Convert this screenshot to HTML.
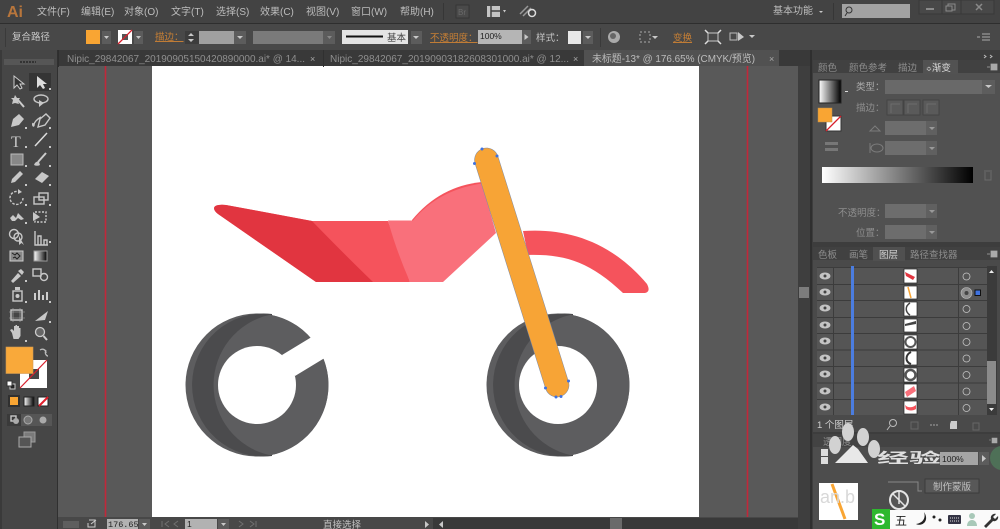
<!DOCTYPE html>
<html><head><meta charset="utf-8">
<style>
html,body{margin:0;padding:0;background:#484848;width:1000px;height:529px;overflow:hidden}
svg{display:block;filter:blur(.35px)}
text{font-family:"Liberation Sans","Noto Sans CJK SC",sans-serif;font-size:9.5px;fill:#c4c4c4}
.m{font-size:10px;fill:#bdbdbd}
.o{fill:#c67f35;text-decoration:underline}
.d{fill:#8e8e8e}
.i{fill:none;stroke:#c8c8c8;stroke-width:1.4}
.f{fill:#c8c8c8}
</style></head><body>
<svg width="1000" height="529" viewBox="0 0 1000 529" xmlns="http://www.w3.org/2000/svg">
<defs>
<linearGradient id="g" x1="0" x2="1" y1="0" y2="0"><stop offset="0" stop-color="#fff"/><stop offset="1" stop-color="#000"/></linearGradient>
</defs>
<!-- base bars -->
<rect width="1000" height="24" fill="#434343"/>
<rect y="23" width="1000" height="1" fill="#2e2e2e"/>
<rect y="24" width="1000" height="26" fill="#484848"/>
<rect y="50" width="1000" height="17" fill="#393939"/>
<!-- canvas -->
<rect x="58" y="66" width="752" height="463" fill="#595959"/>
<rect x="152" y="66" width="547" height="451" fill="#fff"/>
<line x1="105.500" y1="66" x2="105.500" y2="517" stroke="#c0283a" stroke-width="1.600"/>
<line x1="747.500" y1="66" x2="747.500" y2="517" stroke="#c0283a" stroke-width="1.600"/>
<!-- top menu -->
<text x="7" y="17" style="font-size:16px;font-weight:bold;fill:#b8763c">Ai</text>
<text class="m" x="37" y="15">文件(F)</text>
<text class="m" x="81" y="15">编辑(E)</text>
<text class="m" x="124" y="15">对象(O)</text>
<text class="m" x="171" y="15">文字(T)</text>
<text class="m" x="216" y="15">选择(S)</text>
<text class="m" x="260" y="15">效果(C)</text>
<text class="m" x="306" y="15">视图(V)</text>
<text class="m" x="351" y="15">窗口(W)</text>
<text class="m" x="400" y="15">帮助(H)</text>
<rect x="443" y="3" width="1" height="17" fill="#363636"/>
<rect x="456" y="5" width="13" height="13" fill="#4a4a4a" stroke="#363636"/>
<text x="458" y="15" style="font-size:8px;fill:#6a6a6a">Br</text>
<rect x="487" y="6" width="13" height="11" fill="#c4c4c4"/>
<path d="M491 6v11M491 11h9" stroke="#434343" stroke-width="1.500"/>
<path d="M503 10l3 0-1.500 2.500z" class="f"/>
<path d="M520 14l8-8M523 16l8-8" stroke="#999" stroke-width="1.500"/>
<circle cx="532" cy="13" r="3.500" fill="none" stroke="#ddd" stroke-width="1.500"/>
<text class="m" x="773" y="14">基本功能</text>
<path d="M819 11h4l-2 2z" class="f"/>
<rect x="833" y="3" width="1" height="17" fill="#363636"/>
<rect x="842" y="4" width="68" height="14" fill="#a2a2a2"/>
<circle cx="849" cy="10" r="3" fill="none" stroke="#333" stroke-width="1"/><path d="M847 13l-2 3" stroke="#333"/>
<rect x="919" y="0" width="75" height="14" fill="#484848" stroke="#383838"/>
<path d="M942 0v14M961 0v14" stroke="#383838"/>
<rect x="926" y="8" width="8" height="2" fill="#8a8a8a"/>
<rect x="948" y="4" width="7" height="6" fill="none" stroke="#8a8a8a"/><rect x="946" y="6" width="6" height="5" fill="#484848" stroke="#8a8a8a"/>
<path d="M976 4l6 6M982 4l-6 6" stroke="#8a8a8a" stroke-width="1.500"/>
<!-- control bar -->
<rect x="5" y="28" width="1" height="19" fill="#3a3a3a"/>
<text x="12" y="40" style="fill:#c8c8c8">复合路径</text>
<rect x="86" y="30" width="14" height="14" fill="#f9a533"/>
<rect x="102" y="31" width="9" height="13" fill="#5c5c5c"/><path d="M104 36h5l-2.500 3z" class="f"/>
<rect x="118" y="30" width="14" height="14" fill="#fff"/><rect x="122" y="34" width="6" height="6" fill="#555"/><path d="M118 44l14-14" stroke="#d8202c" stroke-width="1.300"/>
<rect x="134" y="31" width="9" height="13" fill="#5c5c5c"/><path d="M136 36h5l-2.500 3z" class="f"/>
<text class="o" x="155" y="40">描边：</text>
<rect x="185" y="31" width="14" height="13" fill="#3c3c3c"/><path d="M188 36h6l-3-3zM188 39h6l-3 3z" class="f"/>
<rect x="199" y="31" width="35" height="13" fill="#a0a0a0"/>
<rect x="234" y="31" width="12" height="13" fill="#5c5c5c"/><path d="M237 36h6l-3 3z" class="f"/>
<rect x="253" y="31" width="70" height="13" fill="#7a7a7a"/>
<rect x="323" y="31" width="12" height="13" fill="#5c5c5c"/><path d="M327 36h5l-2.500 3z" fill="#888"/>
<rect x="342" y="30" width="66" height="14" fill="#e4e4e4"/>
<rect x="346" y="35.500" width="37" height="2" fill="#111"/>
<text x="387" y="41" style="fill:#444">基本</text>
<rect x="411" y="31" width="11" height="13" fill="#5c5c5c"/><path d="M413 36h6l-3 3z" class="f"/>
<text class="o" x="430" y="41">不透明度：</text>
<rect x="478" y="30" width="48" height="14" fill="#b5b5b5"/>
<text x="480" y="39" style="font-size:8.500px;fill:#222">100%</text>
<rect x="522" y="30" width="9" height="14" fill="#5c5c5c"/><path d="M524.500 34v6l4-3z" class="f"/>
<text x="536" y="41">样式：</text>
<rect x="568" y="31" width="13" height="13" fill="#e8e8e8"/>
<rect x="583" y="31" width="10" height="13" fill="#5c5c5c"/><path d="M585 36h6l-3 3z" class="f"/>
<rect x="600" y="28" width="1" height="19" fill="#3a3a3a"/>
<circle cx="614" cy="37" r="6" fill="#aaa"/><circle cx="613" cy="36" r="3" fill="#666"/>
<rect x="640" y="32" width="10" height="10" fill="none" stroke="#aaa" stroke-dasharray="2 2"/>
<path d="M652 36h6l-3 3z" class="f"/>
<text class="o" x="673" y="41">变换</text>
<rect x="708" y="33" width="10" height="8" fill="none" stroke="#c8c8c8"/><path d="M705 30l3 3M721 30l-3 3M705 44l3-3M721 44l-3-3" stroke="#ddd" stroke-width="1.500"/>
<rect x="730" y="33" width="7" height="7" fill="none" stroke="#bbb"/><path d="M738 32l6 5-6 4z" class="f"/>
<path d="M749 35h6l-3 3z" class="f"/>
<path d="M977 37h3M982 34h8M982 37h8M982 40h8" stroke="#aaa"/>
<!-- tabs -->
<rect x="58" y="50" width="1" height="17" fill="#2e2e2e"/>
<text x="67" y="62" textLength="238" lengthAdjust="spacingAndGlyphs" style="font-size:10.400px;fill:#8f8f8f">Nipic_29842067_20190905150420890000.ai* @ 14...</text>
<text x="310" y="62" style="font-size:9px;fill:#aaa">×</text>
<rect x="323" y="50" width="1" height="17" fill="#303030"/>
<text x="330" y="62" textLength="239" lengthAdjust="spacingAndGlyphs" style="font-size:10.400px;fill:#8f8f8f">Nipic_29842067_20190903182608301000.ai* @ 12...</text>
<text x="573" y="62" style="font-size:9px;fill:#aaa">×</text>
<rect x="584" y="50" width="195" height="16" fill="#515151"/>
<text x="592" y="62" textLength="163" lengthAdjust="spacingAndGlyphs" style="font-size:10.400px;fill:#bcbcbc">未标题-13* @ 176.65% (CMYK/预览)</text>
<text x="769" y="62" style="font-size:9px;fill:#aaa">×</text>
<!-- artwork -->
<path d="M214 208Q215 204 226 205L312 221 388 221 410 282 316 282 218 214Q214 211 214 208Z" fill="#f5535c"/>
<path d="M214 208Q215 204 226 205L312 221Q345 255 373 282L316 282 218 214Q214 211 214 208Z" fill="#e13540"/>
<path d="M412 220Q440 186 482 182L490 200 412 221Z" fill="#f5535c"/>
<path d="M388 220.500L413 220.500Q438 190 482 183.500L496 233 443 282 410 282Q396 250 388 220.500Z" fill="#f9707b"/>
<path d="M523 231C565 228 610 240 647 284Q651 292 645 293L623 293C590 262 565 254 528 255Z" fill="#f5535c"/>
<!-- left wheel -->
<circle cx="257" cy="385" r="71.500" fill="#5d5d5f"/>
<path d="M272 314A71.500 71.500 0 1 0 272 456Z" fill="#4b4b4d"/>
<path d="M270 314.700A72 72 0 0 0 270 455.300A71.500 71.500 0 0 0 270 314.700Z" fill="#5d5d5f"/>
<circle cx="257" cy="385" r="39" fill="#fff"/>
<path d="M282 355L310 338 345 318 355 340 323 359 295 376Z" fill="#fff"/>
<!-- right wheel -->
<circle cx="558" cy="385" r="71.500" fill="#5d5d5f"/>
<path d="M573 314A71.500 71.500 0 1 0 573 456Z" fill="#4b4b4d"/>
<path d="M571 314.700A72 72 0 0 0 571 455.300A71.500 71.500 0 0 0 571 314.700Z" fill="#5d5d5f"/>
<circle cx="558" cy="385" r="39" fill="#fff"/>
<!-- fork -->
<line x1="486.500" y1="160" x2="557" y2="385" stroke="#7d8aa6" stroke-width="24.500" stroke-linecap="round"/>
<line x1="486.500" y1="160" x2="557" y2="385" stroke="#f7a436" stroke-width="23.500" stroke-linecap="round"/>
<g fill="#3f72e0"><circle cx="474.500" cy="163.500" r="1.500"/><circle cx="482" cy="149" r="1.500"/><circle cx="497" cy="156" r="1.500"/><circle cx="568.500" cy="381" r="1.500"/><circle cx="545.500" cy="388" r="1.500"/><circle cx="556" cy="397" r="1.500"/><circle cx="561" cy="396.500" r="1.500"/></g>
<!-- status bar -->
<rect x="58" y="517" width="752" height="12" fill="#484848"/>
<rect x="63" y="521" width="16" height="7" fill="#5e5e5e"/>
<path d="M89 520h6v7h-7v-4M91 524l5-4" stroke="#ccc" fill="none"/>
<rect x="107" y="519" width="31" height="10" fill="#b2b2b2"/>
<text x="108" y="527" style="font-size:8.500px;fill:#222;font-family:'Liberation Mono',monospace">176.65</text>
<rect x="139" y="519" width="11" height="10" fill="#5c5c5c"/><path d="M142 523h5l-2.500 3z" class="f"/>
<path d="M162 521v6M169 521l-4 3 4 3M178 521l-4 3 4 3" stroke="#707070" fill="none"/>
<rect x="185" y="519" width="32" height="10" fill="#b2b2b2"/>
<text x="187" y="527" style="font-size:8.500px;fill:#222">1</text>
<rect x="218" y="519" width="11" height="10" fill="#5c5c5c"/><path d="M221 523h5l-2.500 3z" class="f"/>
<path d="M239 521l4 3-4 3M250 521l4 3-4 3M256 521v6" stroke="#707070" fill="none"/>
<text x="323" y="528">直接选择</text>
<path d="M425 521v7l4-3.500z" class="f"/>
<rect x="433" y="518" width="377" height="11" fill="#393939"/>
<path d="M443 521v7l-4-3.500z" class="f"/>
<rect x="610" y="518" width="12" height="11" fill="#6a6a6a"/>
<!-- v scrollbar -->
<rect x="798" y="66" width="12" height="463" fill="#3e3e3e"/>
<rect x="799" y="287" width="10" height="11" fill="#7c7c7c"/>
<!-- left toolbar -->
<rect x="0" y="50" width="58" height="479" fill="#464646"/>
<rect x="57" y="50" width="1" height="479" fill="#303030"/>
<rect x="0" y="50" width="2" height="479" fill="#3a3a3a"/>
<rect x="4" y="59" width="50" height="6" fill="#565656"/>
<path d="M20 62h16" stroke="#333" stroke-dasharray="2 1" stroke-width="2"/>
<rect x="29" y="73" width="22" height="18" fill="#353535"/>
<path d="M14 76v12l3-3 3 4 2-1-2-4h4Z" fill="#333" stroke="#ccc"/>
<path d="M37 76v12l3-3 3 4 2-1-2-4h4Z" fill="#ddd"/>
<!-- wand, lasso -->
<path d="M18 100l6 7" stroke="#ccc" stroke-width="2"/><path d="M15 95l2 3 3 0-2 3 1 3-4-1-3 1 1-4-2-2h3z" class="f"/>
<ellipse cx="41" cy="99" rx="7" ry="4" class="i"/><path d="M39 100l0 7 5-4z" class="f"/>
<!-- pen -->
<path d="M11 127l2-8 6-5 5 5-5 6z" class="f"/><path d="M41 117c-5 3-7 6-7 8s-2 1-1-2M38 127l2-8 6-5 4 4-5 7z" class="i"/>
<!-- T, line -->
<text x="11" y="147" style="font-size:16px;font-family:'Liberation Serif',serif;fill:#c8c8c8">T</text>
<path d="M35 146l12-13" stroke="#ddd" stroke-width="1.500"/>
<!-- rect, brush -->
<rect x="11" y="154" width="12" height="11" fill="#888" stroke="#bbb"/>
<path d="M46 153l-8 9" stroke="#ccc" stroke-width="2"/><path d="M34 165c1-3 3-4 5-3l1 3c-2 1-4 1-6 0z" class="f"/>
<!-- pencil, eraser -->
<path d="M11 183l1-4 8-8 3 3-8 8z" class="f"/>
<path d="M35 179l7-7 7 4-7 7z" class="f"/>
<!-- rotate, scale -->
<path d="M23 198a6.500 6.500 0 1 1-3-5.500" class="i" stroke-dasharray="2.500 1.500"/><path d="M18 189l4 3-4 2z" class="f"/>
<rect x="34" y="197" width="10" height="7" class="i"/><rect x="39" y="193" width="9" height="7" class="i"/>
<!-- warp, free transform -->
<path d="M10 218l3-3 3 3 2-5 3 3 3 3-3 1-3-2-3 3-3 0z" class="f"/>
<rect x="35" y="212" width="11" height="10" class="i" stroke-dasharray="2 1.500"/><path d="M33 212l7 5-7 4z" class="f"/>
<!-- shape builder, mesh -->
<circle cx="14" cy="234" r="4.500" class="i"/><circle cx="18" cy="237" r="4" class="i"/><path d="M19 236v9l2.500-2 2.500 2z" class="f"/>
<path d="M35 231v14h13M38 245v-9h3v9h3v-5h3v5" class="i"/>
<!-- mesh pattern, gradient -->
<rect x="10" y="251" width="13" height="10" fill="#888" stroke="#ccc"/><path d="M12 253l3 2 2-2 3 3-3 3-2-2-2 1" stroke="#222" fill="none"/>
<rect x="34" y="251" width="13" height="10" fill="url(#g)" stroke="#999"/>
<!-- eyedropper, blend -->
<path d="M11 281l7-8 3 3-8 7zM18 271l3-2 3 3-2 3z" class="f"/>
<rect x="33" y="269" width="8" height="7" class="i"/><circle cx="44" cy="277" r="3.500" class="i"/>
<!-- symbol, graph -->
<rect x="13" y="291" width="9" height="10" class="i"/><circle cx="17.500" cy="296" r="2" class="f"/><rect x="15" y="287" width="5" height="3" class="f"/>
<path d="M35 300v-7M39 300v-10M43 300v-5M47 300v-8" stroke="#ccc" stroke-width="2"/>
<!-- artboard, slice -->
<rect x="11" y="310" width="11" height="10" class="i"/><path d="M9 312h16M9 318h16M13 308v14M20 308v14" stroke="#aaa" stroke-width=".6"/>
<path d="M35 321l13-10-3 9z" class="f"/>
<!-- hand, zoom -->
<path d="M12 333l-2-3 2-1 2 2v-5h1.500v4-5h1.500v5-4h2v5-3h1.500v8l-2 3h-5z" class="f"/>
<circle cx="40" cy="332" r="4.500" fill="#666" stroke="#ccc" stroke-width="1.300"/><path d="M43.500 336l3.500 4" stroke="#ccc" stroke-width="2"/>
<!-- corner tick marks -->
<g class="f">
<rect x="49" y="88" width="2" height="2"/><rect x="25" y="127" width="2" height="2"/><rect x="49" y="127" width="2" height="2"/><rect x="25" y="146" width="2" height="2"/><rect x="49" y="146" width="2" height="2"/><rect x="25" y="165" width="2" height="2"/><rect x="49" y="165" width="2" height="2"/><rect x="25" y="184" width="2" height="2"/><rect x="49" y="184" width="2" height="2"/><rect x="25" y="204" width="2" height="2"/><rect x="49" y="204" width="2" height="2"/><rect x="25" y="222" width="2" height="2"/><rect x="49" y="241" width="2" height="2"/><rect x="25" y="280" width="2" height="2"/><rect x="25" y="301" width="2" height="2"/><rect x="49" y="301" width="2" height="2"/><rect x="49" y="321" width="2" height="2"/><rect x="25" y="340" width="2" height="2"/>
</g>
<!-- fill/stroke -->
<rect x="20" y="360" width="27" height="28" fill="#fff"/>
<rect x="29" y="369" width="10" height="10" fill="#464646"/>
<path d="M20 388L47 360" stroke="#d8202c" stroke-width="1.200"/>
<rect x="6" y="347" width="27" height="26.500" fill="#f9a93a" stroke="#d09a52" stroke-width=".6"/>
<path d="M40 350c3-2 6 0 6 3M46 350c-2 4 1 6 2 6" stroke="#bbb" fill="none" stroke-width="1.300"/>
<rect x="10" y="384" width="5" height="5" fill="#222" stroke="#ccc"/><rect x="7" y="381" width="5" height="5" fill="#fff" stroke="#333"/>
<rect x="8" y="395" width="12" height="12" fill="#303030"/><rect x="10" y="397" width="8" height="8" fill="#f9a533"/>
<rect x="24" y="397" width="10" height="9" fill="url(#g)" stroke="#222"/>
<rect x="38" y="397" width="10" height="9" fill="#fff" stroke="#222"/><path d="M39 406l9-9" stroke="#e0202c" stroke-width="2"/>
<rect x="7" y="414" width="45" height="12" fill="#565656"/><rect x="7" y="414" width="14" height="12" fill="#3a3a3a"/>
<rect x="11" y="416" width="5" height="5" class="i" stroke-width="1"/><circle cx="16" cy="421" r="3" fill="#aaa"/>
<circle cx="28" cy="420" r="4" fill="#777" stroke="#aaa"/><circle cx="43" cy="420" r="3.500" fill="#aaa"/>
<rect x="24" y="432" width="11" height="10" fill="#7a7a7a" stroke="#9a9a9a"/><rect x="19" y="437" width="12" height="10" fill="#555" stroke="#aaa"/>
<!-- right column -->
<rect x="810" y="50" width="190" height="479" fill="#3d3d3d"/>
<rect x="810" y="50" width="2" height="479" fill="#2f2f2f"/>
<path d="M984 55l2 1.500-2 1.500M990 55l2 1.500-2 1.500" stroke="#bbb" fill="none"/>
<!-- gradient panel -->
<rect x="813" y="60" width="187" height="182" fill="#515151"/>
<rect x="813" y="60" width="187" height="13" fill="#414141"/>
<rect x="923" y="60" width="35" height="14" fill="#525252"/>
<text class="d" x="818" y="71">颜色</text>
<text class="d" x="849" y="71">颜色参考</text>
<text class="d" x="898" y="71">描边</text>
<text x="926" y="71" style="fill:#dcdcdc"><tspan style="font-size:7px">≎</tspan>渐变</text>
<path d="M987 67h3M991 64h6v6h-6z" fill="#aaa" stroke="#aaa" stroke-width=".8"/>
<rect x="819" y="80" width="22" height="23" fill="url(#g)" stroke="#222"/>
<rect x="845" y="91" width="3" height="1" fill="#ddd"/>
<rect x="826" y="116" width="15" height="15" fill="#fff" stroke="#333"/>
<path d="M826 131l15-15" stroke="#d8202c" stroke-width="1.300"/>
<rect x="818" y="108" width="14" height="14" fill="#f9a533" stroke="#bd914f" stroke-width=".5"/>
<rect x="825" y="142" width="13" height="3" fill="#777"/><rect x="825" y="148" width="13" height="3" fill="#777"/>
<text x="856" y="90" style="fill:#aaa">类型：</text>
<rect x="885" y="80" width="97" height="14" fill="#696969"/>
<rect x="982" y="80" width="13" height="14" fill="#5d5d5d"/>
<path d="M985 85h7l-3.500 3z" class="f"/>
<text x="856" y="111" class="d">描边：</text>
<g fill="#5a5a5a" stroke="#444"><rect x="887" y="100" width="16" height="15"/><rect x="904" y="100" width="16" height="15"/><rect x="923" y="100" width="16" height="15"/></g>
<path d="M891 113v-9h9M908 113v-9h9M927 113v-9h9" stroke="#6c6c6c" fill="none"/>
<path d="M870 131l5-5 5 5z" fill="none" stroke="#7c7c7c"/>
<rect x="885" y="121" width="41" height="14" fill="#6d6d6d"/><rect x="926" y="121" width="11" height="14" fill="#606060"/><path d="M929 127h6l-3 3z" fill="#999"/>
<rect x="885" y="141" width="41" height="14" fill="#6d6d6d"/><rect x="926" y="141" width="11" height="14" fill="#606060"/><path d="M929 147h6l-3 3z" fill="#999"/>
<ellipse cx="877" cy="148" rx="6" ry="4" fill="none" stroke="#7c7c7c"/><path d="M870 143v10" stroke="#7c7c7c"/>
<rect x="822" y="167" width="151" height="16" fill="url(#g)"/>
<path d="M984 171h8M985 172v8h6v-8" stroke="#6c6c6c" fill="none"/>
<text x="838" y="216" class="d">不透明度：</text>
<rect x="885" y="204" width="41" height="14" fill="#6d6d6d"/><rect x="926" y="204" width="11" height="14" fill="#606060"/><path d="M929 210h6l-3 3z" fill="#999"/>
<text x="856" y="236" class="d">位置：</text>
<rect x="885" y="225" width="41" height="14" fill="#6d6d6d"/><rect x="926" y="225" width="11" height="14" fill="#606060"/><path d="M929 231h6l-3 3z" fill="#999"/>
<!-- layers panel -->
<rect x="813" y="247" width="187" height="185" fill="#4a4a4a"/>
<rect x="813" y="247" width="187" height="13" fill="#414141"/>
<rect x="873" y="247" width="32" height="14" fill="#505050"/>
<text class="d" x="818" y="258">色板</text>
<text class="d" x="849" y="258">画笔</text>
<text x="879" y="258" style="fill:#d4d4d4">图层</text>
<text class="d" x="910" y="258">路径查找器</text>
<path d="M987 254h3M991 251h6v6h-6z" fill="#aaa" stroke="#aaa" stroke-width=".8"/>
<rect x="817" y="267" width="170" height="148" fill="#555"/>
<g stroke="#3c3c3c"><path d="M817 267.500h170M817 284.500h170M817 300.500h170M817 317.500h170M817 333.500h170M817 350h170M817 366.500h170M817 383h170M817 399.500h170M833.500 267v148M958.500 267v148"/></g>
<rect x="851" y="266" width="3" height="149" fill="#4b7de0"/>
<g fill="#c4c4c4"><ellipse cx="825" cy="276" rx="5.500" ry="3.500"/><ellipse cx="825" cy="292" rx="5.500" ry="3.500"/><ellipse cx="825" cy="308" rx="5.500" ry="3.500"/><ellipse cx="825" cy="325" rx="5.500" ry="3.500"/><ellipse cx="825" cy="341" rx="5.500" ry="3.500"/><ellipse cx="825" cy="358" rx="5.500" ry="3.500"/><ellipse cx="825" cy="374" rx="5.500" ry="3.500"/><ellipse cx="825" cy="391" rx="5.500" ry="3.500"/><ellipse cx="825" cy="407" rx="5.500" ry="3.500"/></g>
<g fill="#444"><circle cx="825" cy="276" r="1.500"/><circle cx="825" cy="292" r="1.500"/><circle cx="825" cy="308" r="1.500"/><circle cx="825" cy="325" r="1.500"/><circle cx="825" cy="341" r="1.500"/><circle cx="825" cy="358" r="1.500"/><circle cx="825" cy="374" r="1.500"/><circle cx="825" cy="391" r="1.500"/><circle cx="825" cy="407" r="1.500"/></g>
<!-- thumbs -->
<g fill="#fff" stroke="#222" stroke-width=".7"><rect x="904" y="269" width="13" height="14"/><rect x="904" y="286" width="13" height="13"/><rect x="904" y="302" width="13" height="14"/><rect x="904" y="319" width="13" height="13"/><rect x="904" y="335" width="13" height="14"/><rect x="904" y="351" width="13" height="14"/><rect x="904" y="368" width="13" height="14"/><rect x="904" y="384" width="13" height="14"/><rect x="904" y="401" width="13" height="13"/></g>
<path d="M905 272l10 5-2 3-7-4z" fill="#e13540"/>
<path d="M908 287l3 11" stroke="#f9a533" stroke-width="1.500"/>
<path d="M910 303c-5 3-5 9 0 12" stroke="#444" stroke-width="1.500" fill="none"/>
<path d="M905 324l11-3v3l-11 2z" fill="#444"/>
<circle cx="910.500" cy="342" r="5" fill="none" stroke="#555" stroke-width="2"/>
<path d="M911 352c-6 3-6 10 0 12" stroke="#333" stroke-width="2" fill="none"/>
<circle cx="910.500" cy="375" r="5" fill="none" stroke="#555" stroke-width="2.500"/>
<path d="M905 392l9-6 2 5-9 6z" fill="#f9707b"/>
<path d="M905 405c3 3 7 3 11 0v4c-3 2-7 2-10 0z" fill="#f5535c"/>
<g fill="none" stroke="#c4c4c4" stroke-width=".8"><circle cx="966.500" cy="276.500" r="3.500"/><circle cx="966.500" cy="309" r="3.500"/><circle cx="966.500" cy="326" r="3.500"/><circle cx="966.500" cy="342" r="3.500"/><circle cx="966.500" cy="358.500" r="3.500"/><circle cx="966.500" cy="375" r="3.500"/><circle cx="966.500" cy="391.500" r="3.500"/><circle cx="966.500" cy="408" r="3.500"/></g>
<circle cx="966.500" cy="293" r="5.500" fill="#8e8e8e" stroke="#bbb" stroke-width=".6"/><circle cx="966.500" cy="293" r="2" fill="#444"/>
<rect x="975" y="290" width="5.500" height="5.500" fill="#3f72e0" stroke="#111"/>
<rect x="987" y="266" width="10" height="149" fill="#3b3b3b"/>
<rect x="987" y="361" width="9" height="43" fill="#8b8b8b"/>
<path d="M989 273h5l-2.500-3zM989 408h5l-2.500 3z" fill="#eee"/>
<text x="817" y="428" style="fill:#cfcfcf">1 个图层</text>
<circle cx="893" cy="423" r="3.500" fill="none" stroke="#bbb"/><path d="M890 426l-3 4" stroke="#bbb"/>
<rect x="911" y="422" width="7" height="7" fill="none" stroke="#666"/><path d="M930 425h8" stroke="#777" stroke-dasharray="2 1" stroke-width="2"/>
<path d="M951 421h6v8h-7v-5z" fill="#ccc"/><rect x="973" y="423" width="6" height="7" fill="none" stroke="#666"/>
<!-- transparency panel -->
<rect x="813" y="434" width="187" height="95" fill="#4d4d4d"/>
<rect x="813" y="434" width="187" height="13" fill="#434343"/>
<text x="823" y="445" class="d">透明度</text>
<path d="M989 440h2M992 438h5v5h-5z" fill="#aaa" stroke="#aaa" stroke-width=".6"/>
<rect x="940" y="452" width="38" height="13" fill="#a5a5a5"/>
<text x="942" y="462" style="font-size:8.500px;fill:#222">100%</text>
<rect x="979" y="452" width="10" height="13" fill="#5c5c5c"/><path d="M982 455v7l4-3.500z" class="f"/>
<rect x="819" y="483" width="39" height="37" fill="#fff"/>
<path d="M832 484l13 35" stroke="#f9a533" stroke-width="3"/>
<rect x="925" y="479" width="54" height="14" fill="#585858" stroke="#3c3c3c"/>
<text x="933" y="490" style="fill:#c0c0c0">制作蒙版</text>
<path d="M888 482h30v9h4" stroke="#888" fill="none"/>
<!-- watermark paw -->
<g fill="#d2d2d2"><ellipse cx="848" cy="432" rx="6" ry="9"/><ellipse cx="863" cy="437" rx="6" ry="9"/><ellipse cx="874" cy="449" rx="6" ry="9"/><ellipse cx="835" cy="445" rx="6" ry="9"/></g>
<path d="M835 463l18-18 5 4 10 14z" fill="#e8e8e8"/>
<rect x="821" y="449" width="7" height="7" fill="#ddd"/><rect x="821" y="457" width="7" height="7" fill="#ddd"/>
<text x="877" y="463" style="font-size:14px;font-weight:bold;fill:#e0e0e0" textLength="64" lengthAdjust="spacingAndGlyphs">经验</text>
<text x="820" y="503" style="font-size:18px;fill:#d8d8d8">an.b</text>
<circle cx="899" cy="500" r="9" fill="#555" stroke="#e4e4e4" stroke-width="2"/><path d="M893 494l12 12M899 492v12" stroke="#e4e4e4" stroke-width="1.500"/>
<circle cx="1002" cy="458" r="12" fill="#4e7057"/>
<!-- IME bar -->
<rect x="873" y="510" width="127" height="19" fill="#fafafa"/>
<rect x="872" y="509" width="18" height="20" fill="#2eb82e"/>
<text x="874" y="525" style="font-size:17px;font-weight:bold;fill:#fff">S</text>
<text x="895" y="525" style="font-size:12px;fill:#222">五</text>
<path d="M924 512c2 6-1 11-8 12 6 3 14-3 8-12z" fill="#222"/>
<circle cx="934" cy="517" r="1.500" fill="#222"/><circle cx="940" cy="520" r="1.500" fill="#222"/>
<rect x="948" y="515" width="13" height="9" fill="#334" rx="1"/><path d="M950 518h9M950 521h9" stroke="#ddd" stroke-dasharray="1 1"/>
<circle cx="972" cy="516" r="3" fill="#a8c8b8"/><path d="M967 526c0-8 10-8 10 0z" fill="#a8c8b8"/>
<path d="M984 526l7-7c-1-3 2-6 5-5l-3 3 2 2 3-3c1 3-2 6-5 5l-7 7z" fill="#333"/>
</svg>
</body></html>
